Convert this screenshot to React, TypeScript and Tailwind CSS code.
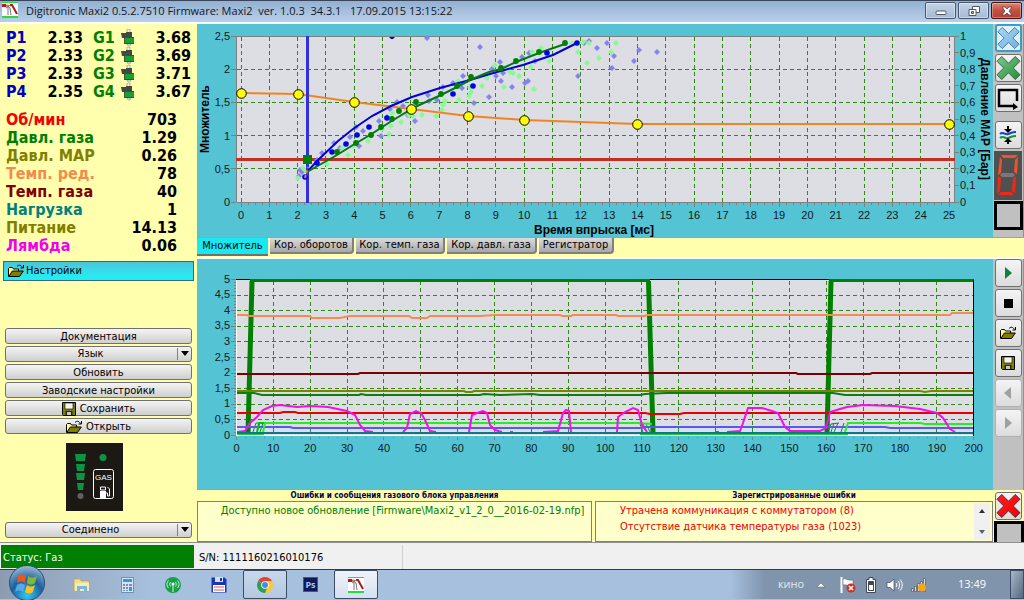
import React from "react";

type Pt = [number, number];

const cylinders = [
  { n: 1, p: "2.33", g: "3.68" },
  { n: 2, p: "2.33", g: "3.69" },
  { n: 3, p: "2.33", g: "3.71" },
  { n: 4, p: "2.35", g: "3.67" },
];

const readings = [
  { label: "Об/мин", value: "703", color: "text-[#f00000]" },
  { label: "Давл. газа", value: "1.29", color: "text-[#008000]" },
  { label: "Давл. MAP", value: "0.26", color: "text-[#808000]" },
  { label: "Темп. ред.", value: "78", color: "text-[#f58a50]" },
  { label: "Темп. газа", value: "40", color: "text-[#800000]" },
  { label: "Нагрузка", value: "1", color: "text-[#008080]" },
  { label: "Питание", value: "14.13", color: "text-[#808000]" },
  { label: "Лямбда", value: "0.06", color: "text-[#f000f0]" },
];

const range = (n: number) => Array.from({ length: n }, (_, i) => i);
const join = (pts: Pt[]) => pts.map((p) => p.join(",")).join(" ");
const comma = (v: number) => String(v).replace(".", ",");

/* ---------- multiplier chart ---------- */

const mapPoints: Pt[] = [[241, 93], [298, 94], [354, 102], [411, 109], [468, 116], [524, 120], [637, 124], [949, 124]];

const petrolCurve: Pt[] = [
  [307, 172], [317, 161], [338, 141], [353, 129], [372, 116], [391, 106], [412, 97],
  [440, 88], [470, 80], [490, 74], [497, 72], [523, 65], [553, 55], [577, 43],
];
const gasCurve: Pt[] = [
  [307, 172], [337, 155], [353, 145], [370, 135], [390, 122], [415, 107], [441, 95],
  [457, 87], [470, 80], [489, 72], [501, 69], [516, 62], [539, 53], [565, 44],
];
const petrolNodes: Pt[] = [
  [305, 177], [317, 163], [332, 152], [346, 144], [357, 135], [369, 127], [387, 118],
  [453, 94], [473, 86], [547, 53], [577, 43],
];
const gasNodes: Pt[] = [
  [337, 152], [356, 143], [371, 135], [381, 127], [392, 119], [399, 111], [416, 102],
  [441, 94], [457, 86], [471, 77], [501, 68], [516, 61], [539, 52], [565, 43],
];
const petrolCloud: Pt[] = [
  [427, 38], [480, 47], [489, 97], [474, 103], [415, 121], [381, 136], [463, 76], [453, 83],
  [443, 87], [437, 100], [429, 101], [397, 102], [403, 106], [390, 109], [379, 121], [387, 117],
  [356, 127], [363, 131], [359, 146], [350, 137], [334, 143], [322, 153], [340, 148], [300, 170],
  [299, 176], [302, 172], [317, 160], [462, 88], [408, 115], [428, 95], [500, 62], [501, 81], [512, 87],
  [528, 81], [525, 83], [496, 76], [522, 57], [529, 53], [578, 76], [589, 41], [597, 48],
  [607, 43], [614, 56], [612, 68], [634, 61], [639, 50], [657, 52], [503, 73], [535, 61], [492, 69], [584, 43],
];
const gasCloud: Pt[] = [
  [298, 178], [303, 168], [305, 170], [307, 178], [327, 164], [348, 155], [342, 148], [353, 146], [368, 141],
  [382, 129], [389, 134], [391, 126], [401, 122], [409, 115], [413, 116], [422, 115], [436, 116],
  [442, 110], [443, 105], [445, 101], [459, 100], [469, 96], [471, 92], [470, 87], [482, 86],
  [487, 78], [458, 81], [392, 113], [504, 87], [513, 73], [519, 76], [534, 89], [495, 65],
  [531, 67], [541, 48], [532, 52], [549, 61], [578, 52], [587, 63], [599, 58], [611, 52],
  [616, 43], [589, 43], [572, 43], [583, 42], [510, 72],
];

const diamonds = (pts: Pt[]) => pts.map(([x, y]) => `M${x - 3} ${y}l3 -3l3 3l-3 3z`).join("");

const MultiplierChart = () => {
  const x = (v: number) => 241 + v * 28.32;
  const y = (v: number) => 202 - v * 66.4;
  return (
    <svg viewBox="197 24 796 213" className="block w-full font-['Liberation_Sans',sans-serif] text-[11px]" role="img" aria-label="Множитель">
      <rect x="236" y="36" width="718" height="166" fill="#dddee4" />
      <g stroke="#2f8a14" strokeDasharray="4 3" shapeRendering="crispEdges">
        {range(26).map((v) => <line key={v} x1={x(v)} x2={x(v)} y1="37" y2="202" />)}
        {range(4).map((v) => <line key={v} x1="237" x2="954" y1={y(0.5 + v / 2)} y2={y(0.5 + v / 2)} />)}
      </g>
      <g stroke="#808080" shapeRendering="crispEdges">
        <path d="M236.5 202V36.5H954.5V202.5H236.5" fill="none" />
        {range(101).map((v) => <line key={v} x1={x(v / 4)} x2={x(v / 4)} y1="203" y2={v % 4 ? 205 : 207} />)}
        {range(6).map((v) => <line key={v} x1="231" x2="236" y1={y(v / 2)} y2={y(v / 2)} />)}
        {range(11).map((v) => <line key={v} x1="955" x2="959" y1={y(v / 4)} y2={y(v / 4)} />)}
      </g>
      <g fill="#10181c">
        {range(26).map((v) => <text key={v} x={x(v)} y="219" textAnchor="middle">{v}</text>)}
        {range(6).map((v) => <text key={v} x="230" y={y(v / 2) + 4} textAnchor="end">{comma(v / 2)}</text>)}
        {range(11).map((v) => <text key={v} x="960" y={y(v / 4) + 4}>{comma(v / 10)}</text>)}
      </g>
      <g fill="#000" className="text-xs font-bold" textAnchor="middle">
        <text x="594" y="234">Время впрыска [мс]</text>
        <text transform="translate(209 119) rotate(-90)">Множитель</text>
        <text transform="translate(981 119) rotate(90)">Давление МАР [Бар]</text>
      </g>
      <rect x="236" y="158" width="719" height="3" fill="#c03020" />
      <path d={diamonds(petrolCloud)} fill="#8484ec" />
      <path d={diamonds(gasCloud)} fill="#88fa90" />
      <polyline points={join(mapPoints)} fill="none" stroke="#f08424" strokeWidth="2" />
      <rect x="306" y="36" width="3" height="167" fill="#3030dc" />
      <polyline points={join(petrolCurve)} fill="none" stroke="#0000d8" strokeWidth="2" />
      <polyline points={join(gasCurve)} fill="none" stroke="#007818" strokeWidth="2" />
      {petrolNodes.map(([cx, cy]) => <circle key={cx} cx={cx} cy={cy} r="2.8" fill="#0000e8" />)}
      <path d="M389 37h6l-2 2h-2z" fill="#0000e8" />
      {gasNodes.map(([cx, cy]) => <circle key={cx} cx={cx} cy={cy} r="2.9" fill="#008000" />)}
      <path d="M305 178l3 -11" stroke="#f08040" strokeWidth="2" strokeDasharray="3 2" />
      <rect x="303" y="155" width="9" height="9" fill="#008000" />
      {mapPoints.map(([cx, cy]) => <circle key={cx} cx={cx + 0.5} cy={cy + 0.5} r="4.8" fill="#ffff00" stroke="#000" />)}
    </svg>
  );
};

/* ---------- recorder chart ---------- */

const lambda: Pt[][] = [
  [[237, 432], [245, 431], [250, 423], [257, 417], [263, 410], [272, 406], [280, 405], [297, 407], [310, 406],
    [328, 407], [347, 411], [355, 415], [360, 425], [365, 431], [373, 432]],
  [[403, 432], [407, 428], [410, 414], [416, 411], [421, 413], [425, 420], [430, 431], [436, 432]],
  [[469, 432], [472, 415], [477, 413], [483, 411], [487, 413], [490, 425], [495, 430], [502, 432]],
  [[510, 432], [513, 432]],
  [[543, 432], [558, 431], [563, 413], [566, 410], [569, 411], [571, 432]],
  [[617, 432], [618, 417], [625, 412], [633, 408], [638, 410], [642, 425], [647, 432]],
  [[716, 432], [719, 432]],
  [[727, 432], [740, 431], [743, 423], [748, 408], [762, 408], [772, 411], [778, 413], [785, 427], [790, 431],
    [820, 431], [826, 428], [830, 412], [840, 409], [847, 407], [863, 405], [895, 406], [920, 409],
    [937, 413], [943, 418], [950, 429], [955, 432]],
];

const traces: { color: string; pts: Pt[] }[] = [
  { color: "#f58a54", pts: [[237, 315], [247, 315], [249, 316], [310, 316], [312, 318], [340, 318], [350, 316], [409, 316], [412, 318],
    [427, 318], [430, 316], [480, 316], [495, 315], [560, 315], [562, 316], [571, 316], [573, 315], [616, 315],
    [618, 316], [645, 316], [647, 315], [950, 315], [952, 313], [973, 313]] },
  { color: "#7c0000", pts: [[237, 374], [358, 374], [360, 373], [796, 373], [798, 374], [870, 374], [872, 373], [973, 373]] },
  { color: "#088010", pts: [[237, 393], [254, 393], [262, 395], [359, 395], [361, 394], [366, 395], [480, 395], [484, 394], [500, 395],
    [532, 394], [540, 395], [640, 395], [645, 394], [666, 393], [833, 393], [845, 395], [973, 395]] },
  { color: "#808000", pts: [[237, 391], [464, 391], [466, 392], [472, 392], [474, 391], [920, 391], [925, 392], [931, 391], [973, 391]] },
  { color: "#e80000", pts: [[237, 413], [280, 413], [283, 412], [295, 412], [298, 413], [645, 413], [650, 414], [680, 414], [684, 413], [973, 413]] },
  { color: "#5a5ae8", pts: [[237, 427], [290, 427], [293, 428], [640, 428], [645, 427], [885, 427], [890, 428], [973, 428]] },
  { color: "#00c010", pts: [[257, 432], [259, 423], [640, 423]] },
  { color: "#20f020", pts: [[263, 432], [265, 423], [640, 423], [652, 424]] },
  { color: "#20f020", pts: [[845, 432], [848, 423], [920, 423], [925, 424], [973, 424]] },
];

const RecorderChart = () => {
  const x = (v: number) => 236.5 + v * 3.686;
  const y = (v: number) => 435.5 - v * 31.2;
  return (
    <svg viewBox="197 260 796 229" className="block w-full font-['Liberation_Sans',sans-serif] text-[11px]" role="img" aria-label="Регистратор">
      <rect x="236" y="279" width="738" height="157" fill="#dddee4" />
      <rect x="237" y="428" width="736" height="5" fill="#d8e0f8" />
      <g stroke="#2f8a14" strokeDasharray="4 3" shapeRendering="crispEdges">
        {range(19).map((v) => <line key={v} x1={x(v * 10 + 10)} x2={x(v * 10 + 10)} y1="281" y2="434" />)}
        {range(9).map((v) => <line key={v} x1="237" x2="973" y1={y(0.5 + v / 2)} y2={y(0.5 + v / 2)} />)}
      </g>
      <g stroke="#808080" shapeRendering="crispEdges">
        {range(81).map((v) => <line key={v} x1={x(v * 2.5)} x2={x(v * 2.5)} y1="437" y2={v % 4 ? 438 : 440} />)}
        {range(11).map((v) => <line key={v} x1="231" x2="236" y1={y(v / 2)} y2={y(v / 2)} />)}
        {range(51).map((v) => <line key={v} x1="234" x2="236" y1={y(v / 10)} y2={y(v / 10)} />)}
      </g>
      <g fill="#10181c">
        {range(21).map((v) => <text key={v} x={x(v * 10)} y="452" textAnchor="middle">{v * 10}</text>)}
        {range(11).map((v) => <text key={v} x="230" y={y(v / 2) + 3} textAnchor="end">{comma(v / 2)}</text>)}
      </g>
      <path d="M236 279.5H973.5V436" fill="none" stroke="#000" />
      <path d="M236.5 280V435.5H973" fill="none" stroke="#fff" />
      <path d="M248 433L252 281M648.500 281L653 433M827 433L831 281" fill="none" stroke="#008000" strokeWidth="5" />
      <path d="M250 280.500H650M829 280.500H973" fill="none" stroke="#008000" strokeWidth="3" />
      <path d="M253 432l3 -9h8M257 432l3 -9M260 432l3 -9M640 424l3 8M643 424l4 8M646 424l4 8M828 432l3 -8l8 -1M831 432l3 -9M834 432l4 -9M841 432l3 -9" fill="none" stroke="#108a18" />
      {traces.map((t, i) => <polyline key={i} points={join(t.pts)} fill="none" stroke={t.color} strokeWidth="2" />)}
      {lambda.map((pts, i) => <polyline key={i} points={join(pts)} fill="none" stroke="#f010e8" strokeWidth="2" />)}
      <path d="M237 434.500H264M640 434.500H848" stroke="#20d040" />
      <path d="M237 433H973" stroke="#107880" strokeWidth="2" />
    </svg>
  );
};

/* ---------- icons ---------- */

const AppIcon = ({ className }: { className: string }) => (
  <svg viewBox="0 0 16 16" className={className}>
    <path d="M0 0h16v16H0z" fill="#fff" />
    <path d="M0 0h16v1H0zM0 14h16v2H0z" fill="#2cd840" />
    <path d="M0 2h4l1 2-1 1H0z" fill="#c01818" />
    <path d="M8 3l2 0 5 9" stroke="#b01818" strokeWidth="2" fill="none" />
    <path d="M5 3l4 1M6 5v8M5 4l3 2 1 7M4 6l3-2" stroke="#777" fill="none" />
  </svg>
);

const FolderIcon = ({ className }: { className: string }) => (
  <svg viewBox="0 0 16 14" className={className}>
    <path d="M.5 12.500v-8l1-1h3l1 1.500h5v2" fill="#ffff90" stroke="#000" />
    <path d="M.8 12.500l3.500-5.500h11l-3.800 5.500z" fill="#808000" stroke="#000" />
    <path d="M9 2.500c2-2 4-1.500 5.500 1M15.500 1v3h-3" fill="none" stroke="#000" />
  </svg>
);

const FloppyIcon = ({ className }: { className: string }) => (
  <svg viewBox="0 0 14 14" className={className}>
    <path d="M.5.5h13v13h-12l-1-1z" fill="#808000" stroke="#000" />
    <path d="M3 1h8v6H3z" fill="#f4f4f4" stroke="#000" strokeWidth=".6" />
    <path d="M3.500 9h7v4.500h-7z" fill="#202020" />
    <path d="M5 10h4v3H5z" fill="#c8c8c8" />
  </svg>
);

const InjectorIcon = () => (
  <svg viewBox="0 0 14 18" className="h-[18px] w-[14px]">
    <path d="M6 0h3v4H6zM6 15h4l-1 2H7z" fill="#f0f0f0" stroke="#888" strokeWidth=".6" />
    <path d="M0 4h5V3h6v5H3v1H1z" fill="#404840" />
    <path d="M3 8h10v7H3z" fill="#305838" />
    <path d="M4 9h9v5H4z" fill="#18a030" />
  </svg>
);

const CrossIcon = ({ from, to, edge }: { from: string; to: string; edge: string }) => (
  <svg viewBox="0 0 26 26" className="size-[26px]">
    <defs>
      <linearGradient id={`x${from.slice(1)}`} x2="1" y2="1">
        <stop stopColor={from} />
        <stop offset="1" stopColor={to} />
      </linearGradient>
    </defs>
    <path d="M6 1l7 7 7-7 5 5-7 7 7 7-5 5-7-7-7 7-5-5 7-7-7-7z" fill={`url(#x${from.slice(1)})`} stroke={edge} />
  </svg>
);

const toolButton =
  "flex h-7 w-[27px] items-center justify-center overflow-hidden rounded-[3px] border border-[#707070] bg-linear-to-b from-[#f4f4f4] to-[#dcdcdc]";

const Tool = ({ label, disabled, className = toolButton, children }: { label: string; disabled?: boolean; className?: string; children: React.ReactNode }) => (
  <button type="button" aria-label={label} disabled={disabled} className={className}>
    {children}
  </button>
);

const sideButton =
  "flex h-4 w-full items-center justify-center gap-1 rounded-[3px] border border-[#707070] bg-linear-to-b from-[#f4f4f4] to-[#cfcfcf] pt-0.5 text-[11px] leading-4";

const SideSelect = ({ label }: { label: string }) => (
  <div className="relative">
    <select
      aria-label={label}
      className="block h-4 w-full appearance-none rounded-[3px] border border-[#707070] bg-linear-to-b from-[#f4f4f4] to-[#cfcfcf] pr-4 text-[11px] leading-[14px] [text-align-last:center]"
    >
      <option>{label}</option>
    </select>
    <svg viewBox="0 0 14 14" className="pointer-events-none absolute top-px right-px size-[14px]">
      <path d="M.5 1v12" stroke="#808080" />
      <path d="M4 4h8l-4 5z" />
    </svg>
  </div>
);

const GasSwitch = () => (
  <svg viewBox="0 0 57 68" className="h-[68px] w-[57px] font-['Liberation_Sans',sans-serif]">
    <path d="M0 0h57v68H0z" fill="#1c1814" />
    <path d="M9 11h11l-1 7h-9zM10 21h9l-1 7h-7zM10 30h9l-1 7h-7zM11 40h7l-1 7h-5z" fill="#0c9444" />
    <circle cx="14.500" cy="53" r="3" fill="#606060" />
    <circle cx="37" cy="14.500" r="3.500" fill="#0c9444" />
    <rect x="27.500" y="26.500" width="20" height="29" rx="2" fill="none" stroke="#fff" />
    <text x="37.500" y="37" textAnchor="middle" fill="#fff" fontSize="8">GAS</text>
    <path d="M34.500 44h5v3h-5z" fill="none" stroke="#fff" />
    <path d="M34 48h6v7h-6z" fill="#fff" />
    <path d="M40 50h1.500v3h2V46l-2-2" fill="none" stroke="#fff" />
  </svg>
);

/* ---------- page parts ---------- */

const TitleBar = () => (
  <header className="flex h-6 items-start border-t border-b-2 border-t-[#38455c] border-b-white bg-linear-to-b from-[#94b0d0] to-[#b8d0ea]">
    <AppIcon className="mt-px ml-0.5 size-4" />
    <h1 className="ml-2 flex-1 truncate font-['Open_Sans','Noto_Sans',sans-serif] text-[11px] leading-5 whitespace-pre text-[#101828]">
      {"Digitronic Maxi2 0.5.2.7510 Firmware: Maxi2  ver. 1.0.3  34.3.1   17.09.2015 13:15:22"}
    </h1>
    <div className="mt-px mr-0.5 flex gap-0.5">
      <button type="button" aria-label="Свернуть" className="flex h-[17px] w-[31px] items-center justify-center rounded-xs border border-[#48586c] bg-linear-to-b from-[#c4d4e6] to-[#a4bad4] ring-1 ring-white/40 ring-inset">
        <svg viewBox="0 0 12 10" className="h-[10px] w-3"><rect x="1" y="5" width="10" height="3.500" rx="1" fill="#fff" stroke="#505864" /></svg>
      </button>
      <button type="button" aria-label="Восстановить" className="flex h-[17px] w-[31px] items-center justify-center rounded-xs border border-[#48586c] bg-linear-to-b from-[#c4d4e6] to-[#a4bad4] ring-1 ring-white/40 ring-inset">
        <svg viewBox="0 0 12 12" className="size-3">
          <path d="M4.500 1.500h7v6h-7z" fill="#fff" stroke="#505864" />
          <path d="M1 4.500h7v6H1z" fill="#fff" stroke="#505864" />
          <path d="M3.500 6.500h2v2h-2z" fill="#a8bcd4" stroke="#505864" />
        </svg>
      </button>
      <button type="button" aria-label="Закрыть" className="flex h-[17px] w-[31px] items-center justify-center rounded-xs border border-[#4c1414] bg-linear-to-b from-[#d88878] via-[#c05040] to-[#b84030] ring-1 ring-white/30 ring-inset">
        <svg viewBox="0 0 12 10" className="h-[10px] w-3"><path d="M1 1h3l2 2 2-2h3L8 5l3 4H8L6 7 4 9H1l3-4z" fill="#fff" stroke="#604040" strokeWidth=".8" /></svg>
      </button>
    </div>
  </header>
);

const Sidebar = () => (
  <aside className="flex w-[197px] shrink-0 flex-col bg-[#ffffae] pt-[5px]">
    <table className="ml-1.5 w-[185px] self-start text-base leading-[18px] font-bold">
      <tbody>
        {cylinders.map((c) => (
          <tr key={c.n} className="h-[18px]">
            <th className="w-8 text-left text-[#0000c0]">P{c.n}</th>
            <td className="w-[45px] text-right">{c.p}</td>
            <th className="w-[38px] pl-2.5 text-left text-[#008000]">G{c.n}</th>
            <td className="w-[14px]"><InjectorIcon /></td>
            <td className="text-right">{c.g}</td>
          </tr>
        ))}
      </tbody>
    </table>
    <dl className="mt-2.5 mr-5 ml-1.5 text-base leading-[18px] font-bold">
      {readings.map((r) => (
        <div key={r.label} className="flex justify-between">
          <dt className={r.color}>{r.label}</dt>
          <dd>{r.value}</dd>
        </div>
      ))}
    </dl>
    <button type="button" className="mt-1.5 mr-[3px] ml-[3px] flex h-5 items-center gap-0.5 border border-[#406870] bg-linear-to-b from-[#48c4d8] to-[#10f4f8] pl-1 text-[11px]">
      <FolderIcon className="h-[14px] w-4" />
      Настройки
    </button>
    <div className="mt-[47px] mr-[5px] ml-[5px] flex flex-col gap-0.5">
      <button type="button" className={sideButton}>Документация</button>
      <SideSelect label="Язык" />
      <button type="button" className={sideButton}>Обновить</button>
      <button type="button" className={sideButton}>Заводские настройки</button>
      <button type="button" className={sideButton}><FloppyIcon className="size-[14px]" />Сохранить</button>
      <button type="button" className={sideButton}><FolderIcon className="h-[14px] w-4" />Открыть</button>
    </div>
    <div className="mt-[9px] flex justify-center pr-2"><GasSwitch /></div>
    <div className="mt-[11px] mr-[5px] ml-[5px]"><SideSelect label="Соединено" /></div>
  </aside>
);

const tab = "h-4 rounded-br-sm border-r-2 border-b-2 border-[#808080] bg-linear-to-b from-[#dcdcdc] to-[#a8a8a8] text-center text-[11px] leading-[14px] whitespace-nowrap";

const Tabs = () => (
  <nav className="flex h-[22px] items-start gap-0.5 border-t border-b-2 border-t-[#a0a0a0] border-b-white bg-[#ffffae]">
    <button type="button" className="h-[18px] w-[71px] border-b-2 border-[#707070] bg-[#18e8f0] text-center text-[11px] leading-4 whitespace-nowrap">Множитель</button>
    <button type="button" className={`${tab} w-[84px]`}>Кор. оборотов</button>
    <button type="button" className={`${tab} w-[89px]`}>Кор. темп. газа</button>
    <button type="button" className={`${tab} w-[90px]`}>Кор. давл. газа</button>
    <button type="button" className={`${tab} w-[75px]`}>Регистратор</button>
  </nav>
);

const toolbar = "flex w-[31px] shrink-0 flex-col items-center gap-0.5 border-r border-[#909090] bg-[#c0c0c0]";

const ChartTools = () => (
  <div className={toolbar}>
    <Tool label="Сбросить" className="flex h-7 w-[27px] items-center justify-center overflow-hidden rounded-[3px] border-2 border-[#3c9cc8] bg-[#e0f0f8]">
      <CrossIcon from="#a8d8f4" to="#70b0e0" edge="#4070a0" />
    </Tool>
    <Tool label="Удалить карту газа"><CrossIcon from="#80c890" to="#209030" edge="#306040" /></Tool>
    <Tool label="Выделить">
      <svg viewBox="0 0 24 24" className="size-6"><path d="M18 20H3V4h18v11" fill="none" stroke="#000" strokeWidth="2.500" /><path d="M17 17l5 4-5 3z" /></svg>
    </Tool>
    <div className="h-[5px]" />
    <Tool label="Сгладить">
      <svg viewBox="0 0 18 18" className="size-[18px]">
        <path d="M1 8c3-3 5 1 8 0s4-2 8-2" fill="none" stroke="#1840e0" strokeWidth="2" />
        <path d="M1 12c3-3 5 1 8 0s4-2 8-2" fill="none" stroke="#109830" strokeWidth="2" />
        <path d="M8 0h2v3h3L9 7 5 3h3zM8 18h2v-2h3L9 12l-4 4h3z" />
      </svg>
    </Tool>
    <svg viewBox="0 0 28 49" className="h-[49px] w-7">
      <path d="M0 0h28v49H0z" fill="#505050" />
      <path d="M7 4h17l-3 3H9zM6 6l2 3-1 13-3 2zM24 6l-1 17-3-2 1-12z" fill="#ec5430" />
      <path d="M4 25l3 2-1 13-3 3zM22 25l-1 17-3-2 1-13zM4 44l3-3h10l3 3z" fill="#f02818" />
      <path d="M8 22h11l2 2-2 2H8l-2-2z" fill="#787878" />
    </svg>
    <div className="-mt-px h-[29px] w-[29px] border-[3px] border-black bg-[#c0c0c0]" />
  </div>
);

const RecorderTools = () => (
  <div className={toolbar}>
    <Tool label="Старт"><svg viewBox="0 0 8 14" className="h-[14px] w-2"><path d="M1 1l7 6-7 6z" fill="#108040" /></svg></Tool>
    <Tool label="Стоп"><span className="size-[9px] bg-black" /></Tool>
    <Tool label="Открыть"><FolderIcon className="h-[14px] w-4" /></Tool>
    <Tool label="Сохранить"><FloppyIcon className="size-[14px]" /></Tool>
    <Tool label="Назад" disabled className={`${toolButton} border-[#b0b0b0]`}><svg viewBox="0 0 8 14" className="h-[14px] w-2"><path d="M7 1L0 7l7 6z" fill="#a0a0a0" /></svg></Tool>
    <Tool label="Вперёд" disabled className={`${toolButton} border-[#b0b0b0]`}><svg viewBox="0 0 8 14" className="h-[14px] w-2"><path d="M1 1l7 6-7 6z" fill="#a0a0a0" /></svg></Tool>
  </div>
);

const messageTitle = "h-[11px] text-center text-[8px] leading-[11px] font-bold text-[#000050]";

const Messages = () => (
  <div className="flex bg-[#ffffae]">
    <section className="mr-[3px] flex-[395]">
      <h2 className={messageTitle}>Ошибки и сообщения газового блока управления</h2>
      <ul className="h-[41px] border border-[#808080] bg-[#ffffcc] pt-px pl-4 text-center text-[11px] leading-4 text-[#008000]">
        <li>Доступно новое обновление [Firmware\Maxi2_v1_2_0__2016-02-19.nfp]</li>
      </ul>
    </section>
    <section className="flex-[398]">
      <h2 className={messageTitle}>Зарегистрированные ошибки</h2>
      <div className="flex h-[41px] border border-[#808080] bg-[#ffffcc]">
        <ul className="flex-1 pt-px pl-6 text-[11px] leading-4 text-[#f00000]">
          <li>Утрачена коммуникация с коммутатором (8)</li>
          <li>Отсутствие датчика температуры газа (1023)</li>
        </ul>
        <div className="mt-px mr-0.5 mb-px flex w-4 flex-col justify-between bg-[#f0f0f0] py-1">
          <button type="button" aria-label="Вверх" className="flex justify-center"><svg viewBox="0 0 8 8" className="size-2"><path d="M1 6l3-4 3 4z" fill="#303030" /></svg></button>
          <button type="button" aria-label="Вниз" className="flex justify-center"><svg viewBox="0 0 8 8" className="size-2"><path d="M1 2h6L4 6z" fill="#606060" /></svg></button>
        </div>
      </div>
    </section>
    <div className="flex w-[31px] shrink-0 flex-col items-center gap-px pt-0.5">
      <Tool label="Удалить ошибки"><CrossIcon from="#ff2020" to="#f00000" edge="#503040" /></Tool>
      <div className="h-[21px] w-[30px] border-[3px] border-b-0 border-black bg-[#c0c0c0]" />
    </div>
  </div>
);

const StatusBar = () => (
  <footer className="flex h-[27px] items-stretch border-t border-[#909090] bg-[#f0f0f0] pt-0.5 text-[11px] leading-[26px]">
    <p className="mb-px ml-px w-[193px] overflow-hidden bg-[#008000] pl-0.5 text-white">Статус: Газ</p>
    <p className="w-[209px] border-r border-[#d0d0d0] pl-[5px]">S/N: 1111160216010176</p>
  </footer>
);

const taskButton = "flex h-[29px] w-11 items-center justify-center rounded-xs border border-[#3c4c64]";

const Taskbar = () => (
  <nav className="flex h-[30px] items-center border-t border-[#303c4c] bg-linear-to-r from-[#8c9cb0] via-[#a6c0de] via-15% to-[#a6c0de] font-['Open_Sans','Noto_Sans',sans-serif] text-white">
    <button type="button" aria-label="Пуск" className="z-10 -mt-1 ml-[9px] size-9">
      <svg viewBox="0 0 36 36" className="size-9">
        <defs>
          <radialGradient id="orb" cy=".85" r=".9">
            <stop stopColor="#30c8f4" />
            <stop offset=".5" stopColor="#1c60a0" />
            <stop offset="1" stopColor="#b0c8dc" />
          </radialGradient>
        </defs>
        <circle cx="18" cy="18" r="17.500" fill="url(#orb)" stroke="#28486c" />
        <path d="M9 11c3-2 5-2 8 0l-1 7c-3-2-5-2-8 0z" fill="#e85820" />
        <path d="M19 11c3 2 5 2 9 0l-2 7c-3 2-5 2-8 0z" fill="#80b830" />
        <path d="M8 20c3-2 5-2 8 0l-2 7c-3-2-5-2-8 0z" fill="#58a8e8" />
        <path d="M18 20c3 2 5 2 8 0l-2 7c-3 2-5 2-8 0z" fill="#f8c020" />
      </svg>
    </button>
    <div className="ml-7 flex items-center">
      <button type="button" aria-label="Проводник" className="mr-[30px]">
        <svg viewBox="0 0 18 16" className="h-4 w-[18px]">
          <path d="M1 2h6l1 2h8v10H1z" fill="#f0dc8c" stroke="#c0a050" strokeWidth=".6" />
          <path d="M2 6h14v8H2z" fill="#f8ecb0" />
          <path d="M4 15V9h10v6h-3v-3H7v3z" fill="#78b8e0" />
        </svg>
      </button>
      <button type="button" aria-label="Калькулятор" className="mr-[31px]">
        <svg viewBox="0 0 13 16" className="h-4 w-[13px]">
          <path d="M.5.5h12v15H.5z" fill="#d4e4f4" stroke="#6c90b8" />
          <path d="M2 2h9v3H2z" fill="#4890d0" />
          <path d="M2 7h2v2H2zM5 7h2v2H5zM8 7h3v2H8zM2 10h2v2H2zM5 10h2v2H5zM2 13h2v1H2zM5 13h2v1H5z" fill="#7890b0" />
          <path d="M8 10h3v4H8z" fill="#4890d0" />
        </svg>
      </button>
      <button type="button" aria-label="Модем" className="mr-[30px]">
        <svg viewBox="0 0 16 16" className="size-4">
          <circle cx="8" cy="8" r="8" fill="#18a048" />
          <path d="M8 7v8M5.500 5c-1 1.500-1 3 0 4.500M10.500 5c1 1.500 1 3 0 4.500M3.500 3.500c-2 2.500-2 5 0 7.500M12.500 3.500c2 2.500 2 5 0 7.500" fill="none" stroke="#d0f8d8" />
          <circle cx="8" cy="7" r="1.500" fill="#fff" />
        </svg>
      </button>
      <button type="button" aria-label="Файлы" className="mr-4">
        <svg viewBox="0 0 16 16" className="size-4">
          <path d="M.5.5h13l2 2v13H.5z" fill="#1838b8" />
          <path d="M4 0h8v5H4z" fill="#d8e0f0" />
          <path d="M9 1h2v3H9z" fill="#1838b8" />
          <path d="M2 8h12v7H2z" fill="#fff" />
          <path d="M3 10h10M3 13h10" stroke="#e05050" />
        </svg>
      </button>
      <button type="button" aria-label="Chrome" className={`${taskButton} mr-4 bg-linear-to-b from-[#c8d8ec] to-[#b4c8e0]`}>
        <svg viewBox="0 0 16 16" className="size-4">
          <path d="M8 8L1.100 4A8 8 0 0 1 14.900 4z" fill="#e04434" />
          <path d="M8 8V4h6.900A8 8 0 0 1 8 16z" fill="#f8cc30" />
          <path d="M8 8l2 3.500L8 16A8 8 0 0 1 1.100 4z" fill="#28a050" />
          <circle cx="8" cy="8" r="3.800" fill="#fff" />
          <circle cx="8" cy="8" r="3" fill="#4888e8" />
        </svg>
      </button>
      <button type="button" aria-label="Photoshop" className="mr-4 size-[15px] border border-[#3858a0] bg-[#101858] text-center text-[9px] leading-3 font-bold text-[#a0c8f8]">Ps</button>
      <button type="button" aria-label="Digitronic" className={`${taskButton} bg-linear-to-b from-[#f0f4fa] to-[#d4e0f0]`}>
        <AppIcon className="size-4" />
      </button>
    </div>
    <div className="ml-auto flex h-full items-center bg-linear-to-r from-transparent to-[#8094ac] to-12% pl-12">
      <span className="w-8 text-[11px] text-[#e4eaf2]">кино</span>
      <svg viewBox="0 0 10 6" className="mr-3.5 ml-1.5 h-1.5 w-[10px]"><path d="M1 5l4-4 4 4z" fill="#fff" stroke="#506078" strokeWidth=".5" /></svg>
      <svg viewBox="0 0 16 16" className="mr-2.5 size-4">
        <path d="M1.500 0v16" stroke="#fff" strokeWidth="2" />
        <path d="M3 2c3-1 5 2 10 1v6c-4 1-6-2-10-1z" fill="#fff" stroke="#505868" strokeWidth=".5" />
        <circle cx="11" cy="11" r="4.500" fill="#d03028" />
        <path d="M9 9l4 4M13 9l-4 4" stroke="#fff" strokeWidth="1.500" />
      </svg>
      <svg viewBox="0 0 10 16" className="mr-2.5 h-4 w-[10px]">
        <path d="M3 .5h4v2h2.500v13h-9v-13H3z" fill="#fff" stroke="#404858" />
        <path d="M2.500 4.500h5v9h-5z" fill="#fff" stroke="#404858" />
        <path d="M3 5h4v3H3z" fill="#404858" />
      </svg>
      <svg viewBox="0 0 17 14" className="mr-2 h-[14px] w-[17px]">
        <path d="M1 4.500h3L8 1v12L4 9.500H1z" fill="#fff" stroke="#404858" strokeWidth=".7" />
        <path d="M10 5c1 1 1 3 0 4M12 3c2 2 2 6 0 8M14 1.500c3 3 3 8 0 11" fill="none" stroke="#fff" />
      </svg>
      <svg viewBox="0 0 16 14" className="size-4">
        <path d="M.5 10.500h2v3h-2zM3.500 8.500h2v5h-2zM6.500 5.500h2v8h-2zM9.500 3.500h2v10h-2zM12.500.5h2v13h-2z" fill="#d8dce4" stroke="#505868" strokeWidth=".7" />
        <circle cx="11" cy="9.500" r="4" fill="#f4a818" />
      </svg>
      <time className="mr-6 ml-[31px] text-[11px]">13:49</time>
      <button type="button" aria-label="Показать рабочий стол" className="h-full w-[14px] border border-[#3c4c64] bg-linear-to-br from-[#a8b8c8] to-[#566a80]" />
    </div>
  </nav>
);

const App = () => (
  <div className="flex min-h-screen flex-col bg-[#a6c0de] font-['DejaVu_Sans_Condensed','DejaVu_Sans',sans-serif] text-black">
    <TitleBar />
    <div className="flex">
      <Sidebar />
      <main className="min-w-0 flex-1">
        <div className="flex">
          <div className="min-w-0 flex-1 bg-[#54c4d4]"><MultiplierChart /></div>
          <ChartTools />
        </div>
        <Tabs />
        <div className="flex">
          <div className="min-w-0 flex-1 border-t border-b border-t-[#54c4d4] border-b-[#a0a0a0] bg-[#54c4d4]"><RecorderChart /></div>
          <RecorderTools />
        </div>
        <Messages />
      </main>
    </div>
    <StatusBar />
    <Taskbar />
  </div>
);

export default App;
